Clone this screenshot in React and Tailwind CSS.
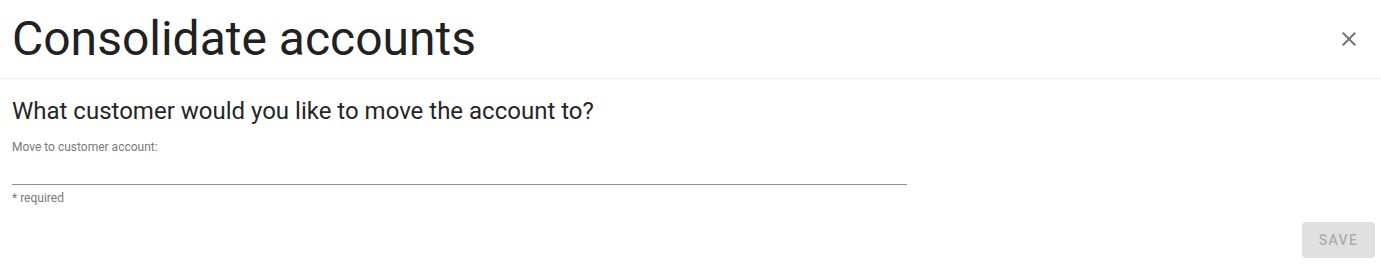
export default function App() {
  return (
    <div className="w-[1381px] h-[268px] bg-white text-[#212121] font-['Roboto',_'Liberation_Sans',_sans-serif] flex flex-col">
      {/* HEADER */}
      <div className="h-[79px] flex items-center justify-between pl-3 pr-2 border-b border-[#efefef]">
        <h1 className="text-[48px] leading-[56px] font-normal -mt-px">Consolidate accounts</h1>
        <button className="w-12 h-12 flex items-center justify-center rounded-full text-[#757575]">
          <svg viewBox="0 0 24 24" className="w-6 h-6" fill="currentColor">
            <path d="M19 6.41 17.59 5 12 10.59 6.41 5 5 6.41 10.59 12 5 17.59 6.41 19 12 13.41 17.59 19 19 17.59 13.41 12z" />
          </svg>
        </button>
      </div>

      {/* BODY */}
      <div className="px-3 pt-4 flex-1 flex flex-col">
        <h2 className="text-[24px] leading-8 font-normal text-[#262626]">What customer would you like to move the account to?</h2>

        <label className="mt-3 text-[12px] leading-4 text-[#7a7a7a]">Move to customer account:</label>
        <input className="w-[895px] h-[30px] border-b border-[#8f8f8f] outline-none text-[16px]" />
        <p className="mt-[5px] text-[12px] leading-4 text-[#7a7a7a]">* required</p>

        <div className="flex justify-end mt-auto mb-[10px] -mr-[6px]">
          <button
            disabled
            className="w-[73px] h-9 rounded bg-[#e0e0e0] text-[#adadad] text-[14px] font-medium tracking-[0.1em] uppercase"
          >
            Save
          </button>
        </div>
      </div>
    </div>
  );
}
